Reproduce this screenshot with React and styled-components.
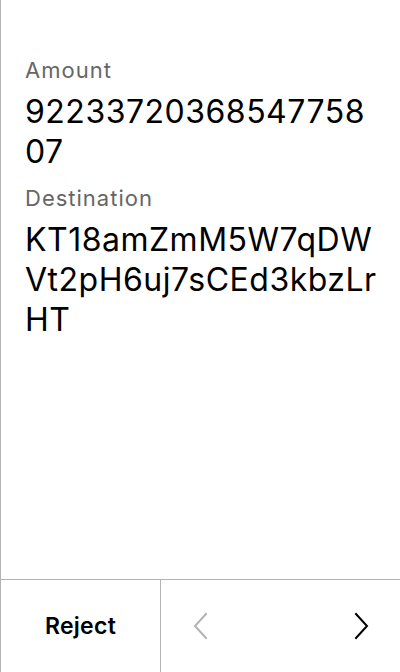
import React from "react";
import styled, { createGlobalStyle } from "styled-components";

const Global = createGlobalStyle`
  html, body {
    margin: 0;
    padding: 0;
    background: #ffffff;
  }
  body {
    font-family: Inter, "Noto Sans", sans-serif;
    -webkit-font-smoothing: antialiased;
  }
`;

const Screen = styled.div`
  display: flex;
  flex-direction: column;
  width: 400px;
  height: 672px;
  box-sizing: border-box;
  border-left: 1px solid #b3b3b3;
  background: #fff;
`;

const Content = styled.div`
  flex: 1;
  display: flex;
  flex-direction: column;
  padding: 56px 20px 0 24px;
`;

const Field = styled.div`
  display: flex;
  flex-direction: column;
  margin-bottom: 12px;
`;

const Label = styled.div`
  font-size: 22px;
  line-height: 28px;
  letter-spacing: 1px;
  color: #666666;
  margin-bottom: 8px;
`;

const Value = styled.div`
  font-size: 32px;
  line-height: 40px;
  letter-spacing: 0.5px;
  color: #000;
  word-break: break-all;
`;

const Footer = styled.div`
  display: flex;
  height: 92px;
  border-top: 1px solid #b3b3b3;
`;

const RejectButton = styled.button`
  width: 160px;
  border: none;
  border-right: 1px solid #b3b3b3;
  background: none;
  font-family: Inter, "Noto Sans", sans-serif;
  font-size: 23px;
  font-weight: 600;
  letter-spacing: 0.3px;
  color: #000;
  padding: 0;
`;

const Pager = styled.div`
  flex: 1;
  display: flex;
  align-items: center;
  justify-content: space-between;
  padding: 0 27px;
`;

const NavButton = styled.button`
  display: flex;
  align-items: center;
  justify-content: center;
  width: 24px;
  height: 28px;
  padding: 0;
  border: none;
  background: none;
  color: ${(p) => (p.disabled ? "#b3b3b3" : "#000")};
`;

function Chevron({ dir }) {
  const d = dir === "left" ? "M13 2 L2 14 L13 26" : "M2 2 L13 14 L2 26";
  return (
    <svg width="15" height="28" viewBox="0 0 15 28" fill="none">
      <path d={d} stroke="currentColor" strokeWidth="2" strokeLinecap="square" />
    </svg>
  );
}

const fields = [
  { label: "Amount", value: "9223372036854775807" },
  { label: "Destination", value: "KT18amZmM5W7qDWVt2pH6uj7sCEd3kbzLrHT" },
];

export default function App() {
  return (
    <>
      <Global />
      <Screen>
        <Content>
          {fields.map((f) => (
            <Field key={f.label}>
              <Label>{f.label}</Label>
              <Value>{f.value}</Value>
            </Field>
          ))}
        </Content>
        <Footer>
          <RejectButton>Reject</RejectButton>
          <Pager>
            <NavButton disabled>
              <Chevron dir="left" />
            </NavButton>
            <NavButton>
              <Chevron dir="right" />
            </NavButton>
          </Pager>
        </Footer>
      </Screen>
    </>
  );
}
